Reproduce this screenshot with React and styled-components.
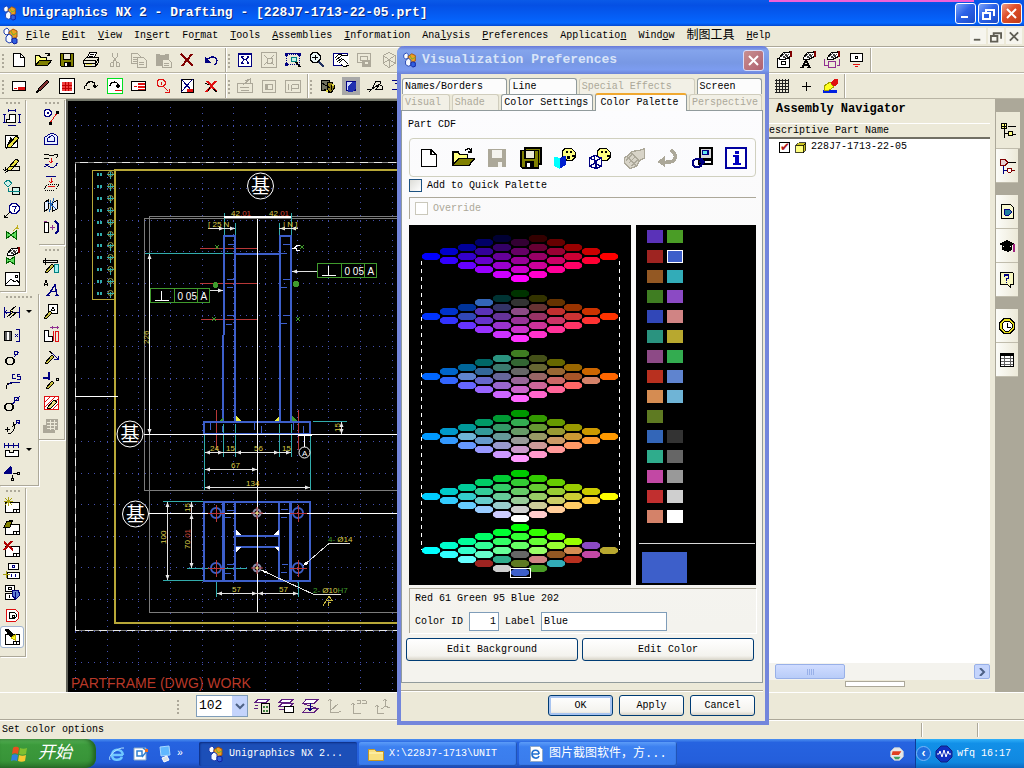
import styled, { createGlobalStyle, css } from "styled-components";

const GlobalStyle = createGlobalStyle`
    *, *::before, *::after {
        box-sizing: border-box;
    }

    body {
        margin: 0;
        background: #ece9d8;
    }

    body, button, input, select, table {
        font-family: "Liberation Mono", "Noto Sans CJK SC", monospace;
        font-size: 10px;
        line-height: 12px;
        color: #000;
    }
`;

/* ---------- icons ---------- */

const K = "#000";
const G = "#aca899";
const N = "#000080";
const R = "#e01010";
const M = "#800000";
const O = "#808000";
const Y = "#ffff80";
const W = "#fff";
const T = "#008080";

// every entry is a list of [path, stroke, fill, stroke width] on an 18 x 18 grid
const HAND = ["M4.5 6.5l4-5h5l2-1v5l-4 2-2 1h-5z", K, W];
const HATCH = ["M6 6l4-4M8 7l4-4M10 7l4-4M7 4l3 3M10 3l3 3", "#404040"];
const CUFF = ["M15 0h2v6h-2z", "none", M];
const PENCIL = ["M5 13l8-9 3 2-8 9-4 1z", K, "#e8e040"];
const SHEET = ["M2.5 6.5h14v10h-14z", K, W];
const SHEETBOX = ["M10.5 16v-2.5h6M13.5 14v2", K];
const FOLDER = [
    ["M1.5 14.5v-10h4l1 2h6v3", K, Y],
    ["M1.5 14.5l4-5h12l-4 5z", K, O],
    ["M10.5 3.5c2-2 4-2 5 1m0-3v3h-3", K],
];

const ICONS = {
    logo: [
        ["M2 3l3-2 2 2v4l-3 1-2-2z", "#2040b0", W],
        ["M7 5l4-3 4 2v6l-4 2-4-3z", "#a05010", "#f0a020"],
        ["M7 7l3 2v6l-3 1-3-2v-4z", "#2040b0", "#f4f8ff"],
        ["M12 11l3 1v4l-3 1-2-2v-3z", "#1020a0", "#3060e0"],
        ["M9 4l2 4 4-2", "#70b030"],
    ],
    new: [["M3.5 2.5h7l4 4v9h-11z", K, W], ["M10.5 2.5v4h4", K]],
    open: FOLDER,
    save: [
        ["M2.5 2.5h13v13h-12l-1-1z", K, O],
        ["M5.5 2.5h7v6h-7z", K, "#ece9d8"],
        ["M6 11h6v4h-6z", K, K],
        ["M7 12h2v3h-2z", "none", W],
    ],
    saveOff: [
        ["M2 2h14v14h-13l-1-1z", "none", G],
        ["M5 3h8v6h-8z", "none", "#f4f3ee"],
        ["M10 12h3v4h-3z", "none", "#f4f3ee"],
    ],
    saveAs: [
        ["M4.5 1.5h12v12h-12z", K, O],
        ["M1.5 3.5h13v13h-12l-1-1z", K, O],
        ["M4.5 3.5h7v6h-7z", K, "#ece9d8"],
        ["M5 12h6v4h-6z", K, K],
        ["M6 13h2v3h-2z", "none", W],
    ],
    print: [
        ["M5.5 6.5l2-5h7l-2 5", K, W],
        ["M1.5 9.5l3-3h12v5l-3 4h-11z", K, "#ece9d8"],
        ["M1.5 9.5h12v6m-12-3h12l3-5M8 3.5h4M7 5.5h4", K],
        ["M4 13h6v1h-6z", "none", "#e8e040"],
    ],
    cut: [
        ["M6.5 1.5v4l5 6M11.5 1.5v4l-5 6", G],
        ["M5.5 11.5h2v4h-3v-3zM10.5 11.5h2l1 1v3h-3z", G],
    ],
    copy: [
        ["M1.5 2.5h6l3 3v7h-9zM3 6.5h5M3 8.5h5M3 10.5h5", G],
        ["M7.5 6.5h6l3 3v7h-9zM9 11.5h5M9 13.5h5", G, "#ece9d8"],
    ],
    paste: [
        ["M2 3h13v12h-13z", "none", G],
        ["M6 2h5v2h-5z", "none", "#ece9d8"],
        ["M8.5 8.5h6l3 3v5h-9zM10 12.5h5M10 14.5h5", G, "#ece9d8"],
    ],
    delete: [["M3 3l12 12M14 3L4 15", M, "none", 2]],
    undo: [["M5 9c3-4 9-4 10 0 0 3-1 4-3 5", N, "none", 1.3], ["M3 6v6h6z", "none", N]],
    fit: [
        ["M2.5 2.5h13v13h-13zM3 3.5h12", N, W],
        ["M6 6.5l2 2-2 3M12 6.5l-2 2 2 3M5.5 7v-1.5h2M12.5 7v-1.5h-2M5.5 11v1.5h2M12.5 11v1.5h-2", N],
    ],
    fitOff: [
        ["M1.5 1.5h15v15h-15z", G],
        ["M4 4l3 3M14 4l-3 3M4 14l3-3M14 14l-3-3M7 7h5v5h-5z", G],
    ],
    zoomWin: [
        ["M2.5 3.5h13v10h-13z", N, "none", 1, "1 1"],
        ["M1 2h3v3h-3zM14 2h3v3h-3zM1 12h3v3h-3z", "none", N],
        ["M1 2.5h16", N],
        ["M7.5 6.5h5v4h-5z", T, "#c0f0e8"],
        ["M12 11l4 5", K, "none", 2],
    ],
    zoom: [
        ["M5 1.5h4l3 3v4l-3 3h-4l-3-3v-4z", K, "#e8f4f4"],
        ["M4 6.5h6M7 4v5", K],
        ["M11 11l5 5", "#203060", "none", 2.5],
    ],
    pan: [
        ["M1.5 2.5h14v12h-14z", N, W],
        ["M5 5l4-2 4 2 4-1v8l-4 4-4-2-5-5z", "none", W],
        ["M3 7l4-4 5 2 4-1M4 9l5-4M5 11l5-4M7 12l4-4 5 5M9 13l3 3 5-2", K],
    ],
    camOff: [
        ["M1.5 2.5h13v9h-13zM4.5 5.5h7v4h-7z", G],
        ["M6 9h9v7h-9z", "none", G],
        ["M9 11h3v2h-3z", "none", "#ece9d8"],
    ],
    cubeOff: [["M9 1.5l6 3v8l-6 4-6-4v-8zM3 4.5l6 4 6-4M9 8v8M3 12l6-3 6 3", G]],
    sheetRed: [["M2.5 4.5h13v9h-13z", K, W], ["M8 10h7v3h-7z", "none", R], ["M4 11.5h3", R]],
    pen: [["M3 15l2-4 8-8 2 2-8 8z", K, "#803030"], ["M2 16l3-3", K, "none", 2]],
    grid: [
        ["M1.5 1.5h15v15h-15z", K, W],
        ["M4 5h10v9h-10z", "none", "#f04040"],
        ["M4 8.5h10M4 11.5h10M7.5 5v9M10.5 5v9", "#c00000"],
    ],
    arc: [["M4 9c0-5 8-6 9-1v2M11 8l2 3 3-3", K, "none", 1.3], ["M2.5 9v3M5 12.5h3", K]],
    arcGreen: [
        ["M1.5 1.5h15v15h-15z", "#00e020", W],
        ["M4 9c0-5 8-5 8-1v2M10 8l2 3 2-3", K, "none", 1.3],
        ["M9 13.5h7", R],
    ],
    sheetText: [["M1.5 4.5h14v9h-14z", K, W], ["M8 7h7M8 10h7M8 12.5h7", R, "none", 1.4], ["M4 9.5h3", R]],
    probe: [
        ["M5 2.5h4l2 2v3l-2 2h-4l-2-2v-3zM7.5 5v3", R],
        ["M10 10l4 4M11 15.5h4.5v-4", R],
    ],
    bomBlue: [
        ["M3.5 2.5h12v13h-12z", K, W],
        ["M3 2l12 13M15 2L3 15", N],
        ["M9 12h6v3h-6z", "none", R],
    ],
    redX: [
        ["M5 4l9 10M14 4L4 15", "#e01010", "none", 2],
        ["M3 6l4 2M11 12l4 3M6 14l2-4", K],
    ],
    off1: [["M1.5 6.5h15v9h-15zM4 10.5h9M9 4l5-2v4M5 13.5h8M7 8l6-5", G]],
    off2: [["M2.5 3.5h13v12h-13zM7.5 7.5h5v5h-5z", G], ["M5 7h2v6h-2z", "none", G]],
    off3: [["M1.5 3.5h15v12h-15zM4.5 6.5v6M7.5 7.5h7v4h-7M7.5 7.5v6", G]],
    tools: [
        ["M3 3h8v10h-8z", K, "#707060"],
        ["M9 6l5-1 3 5-4 6-4-3z", K, "#908020"],
        ["M6 12l6 4M4 6l8 5M13 8v5", K],
        ["M14 7h2v2h-2zM8 13h2v2h-2z", "none", "#e8e040"],
    ],
    solid: [
        ["M0 0h18v18h-18z", "none", "#a8a8a8"],
        ["M4.5 4.5h9v9h-9z", N, "#d0d8ff"],
        ["M6 9l5-4h3v6l-4 4h-4z", "none", "#2030b0"],
    ],
    spline: [["M1 12h5l4-8h4v3l-4 5h7M6 12l6-4M3 15l3-3M12 7l4 2v4", K]],
    wire: [["M2 3.5h6v12M5 6.5h10M12.5 2v14M2 12.5h12", N]],
    folderHand: [["M2.5 7.5h12v9h-12z", K, W], HAND, HATCH, CUFF, ["M6.5 10.5h4v3h-4z", K, W]],
    textHand: [HAND, HATCH, CUFF, ["M3 17l4-8 4 8M5 14h5M1 16.5h4M8 16.5h4", K, "none", 1.5]],
    cycleHand: [
        HAND,
        HATCH,
        CUFF,
        ["M1.5 8v6h3M16.5 8v6h-3M5.5 10.5h7v6h-7z", "#903090"],
    ],
    display: [
        ["M3.5 2.5h12v8h-12z", K, W],
        ["M8.5 5.5h2v2h-2z", K],
        ["M6 13.5h7M8 15.5h3", R],
    ],
    mesh: [["M3.5 2v14M6.5 2v14M9.5 2v14M12.5 2v14M15.5 2v14M2 3.5h14M2 6.5h14M2 9.5h14M2 12.5h14M2 15.5h14", "#202020"]],
    plus: [["M9.5 5v9M5 9.5h9", K]],
    brush: [
        ["M2 13h14v3h-14z", "none", "#0020e0"],
        ["M3 9l6-4 4 5-5 3h-5z", "#a0a000", "#ffff20"],
        ["M10 6l4-4h3l-1 5-3 2z", R, R],
    ],
    dim: [
        ["M6.5 5.5v5h-3v3h9v-8z", K, W],
        ["M5 1.5h7M5.5 0v3M12.5 0v3M1.5 6v7M0 5.5h3M0 13.5h3M16.5 6v7M15 5.5h3M15 13.5h3M5 16.5h8", N],
    ],
    note: [["M2.5 3.5h12v12h-12z", K, W], ["M5 13l3-7 3 7M6 11.5h4", K, "none", 1.3], PENCIL],
    label: [PENCIL, ["M5.5 11.5h11v4h-11l-3 2", K], ["M2.5 12v4M0 14l2 2 2-2", K]],
    symbolId: [
        ["M5 2l4 3-4 4-4-4z", T, "#d0f0e8"],
        ["M9.5 9.5h7v7h-7z", K, "#d0f0e8"],
        ["M5.5 10v3.5h3M9 13.5h8", T],
    ],
    balloon: [
        ["M9 2.5h4l3 3v4l-3 3h-4l-3-3v-4z", N, W],
        ["M9 5.5h4l-2 5", N],
        ["M7 11l-6 6M1.5 14v2.5h3", K],
    ],
    weld: [["M3 7v8l5-4 5 4v-8l-5 4z", "#006000", "#60e060"], ["M10 7l5-5M14.5 1v3M16 4.5h-3", "#c0b020"]],
    weldHand: [["M3 10v7l4-3 4 3v-7l-4 3z", "#006000", "#60e060"], HAND, HATCH, CUFF],
    image: [
        ["M2.5 2.5h14v13h-14z", K, W],
        ["M3 14l5-5 4 3 2-2 3 4M12 5h2v2h-2z", K],
    ],
    rapid: [["M1.5 4v11M16.5 4v11M2 9.5h14M4 7l-2 2 2 2", N], ["M4 14l6-5-3-1 6-5M7 15l7-6-3 0", K, Y]],
    cylDim: [
        ["M1.5 5.5h7v9h-7z", K, "#606060"],
        ["M4 6h2v8h-2z", "none", W],
        ["M13 3.5h3.5v12h-3.5M12 8l3 3M12 11l3-3", N],
    ],
    hole: [
        ["M5 8.5h4l2 2v3l-2 2h-4l-2-2v-3z", K, "none", 1.4],
        ["M11 8l5-5M11.5 2.5h3v3h-3z", N],
    ],
    chamfer: [
        ["M3 17c0-6 3-6 6-6", K],
        ["M12 2.5h-2.5v4h3M17 2.5h-2.5v2h2.5v2.5h-3M8 10.5h9M5 13l4-3", N],
    ],
    diameter: [["M4 8.5h4l2 2v3l-2 2h-4l-2-2v-3z", K, "none", 1.4], ["M11.5 2.5h4v3h-4zM11 7l6-6M9 9l3-2", N]],
    radius: [["M10 4c3 5 1 11-5 12M2 11.5h5M4.5 9v5M9 9l4-3", K], ["M13.5 6v-4h2.5v2h-2.5l3 2", N]],
    ordinate: [["M1.5 2v5M5.5 2v5M10.5 2v5M15.5 2v5M1 4.5h15", N], ["M2.5 15.5v-6h4v2h4v-2h5v6z", K, W]],
    origin: [["M1 9h6v-7M6 3h2v6h-2z", N, N], ["M10 9.5h4M9.5 11v3", K], ["M14.5 8.5h2v2h-2zM8.5 14.5h2v2h-2z", K]],
    circles: [
        ["M4 1.5h3l2 2v3l-2 2h-3l-2-2v-3z", N, W],
        ["M5 4h2v2h-2z", "none", N],
        ["M8 15l7-10", R],
        ["M7 14h2v2h-2zM14 3h2v2h-2z", K, K],
    ],
    offset: [
        ["M2.5 14.5v-7l6-4c6 0 7 3 7 5v6z", N, "#e8f0ff"],
        ["M5.5 11.5v-3l4-3c3 0 3 2 3 3v3z", N],
    ],
    curves: [
        ["M2 3c5-3 6 3 10 0s4 2 2 3M2 6.5h5", K],
        ["M9.5 6v5M7 9l2 2 2-2", R],
        ["M2 15c5-4 6 3 10 0s4-4 2-4M3 12.5h4", N],
    ],
    project: [
        ["M4 2.5h10", N],
        ["M9.5 4v5M7 7l2 2 2-2", R],
        ["M2 15l4-5h11l-4 6h-11", K, "none", 1, "1 1"],
        ["M6 12.5h7", R],
    ],
    section: [
        ["M2.5 6.5l4-3v9l-4 3zM10.5 6.5l5-2v8l-5 3z", K, "#e8f0ff"],
        ["M5 5l9 8M12 2l-5 14M8.5 4v10", "#2060b0"],
    ],
    mirror: [
        ["M2.5 4.5h4v10h-4z", K, W],
        ["M2 3.5h3M8 9.5h5M10.5 7v5", "#903090"],
        ["M13 3l3 3v7l-3 3", N, "none", 1.5],
    ],
    editTool: [
        ["M1 4.5h14v2h-14zM3.5 2v7", K, "#e8e8e0"],
        ["M12.5 8.5h4v8h-4z", T, "#a0f0f0"],
        ["M3 16l7-8 2 2-7 7z", K, "#c8c040"],
    ],
    textEdit: [["M2 7l2-6 2 6M2 5.5h4", K], ["M6 16l7-10 2 10M8 12.5h6M4 16.5h4M13 16.5h4", N, "none", 1.4]],
    noteEdit: [
        ["M6.5 2.5h9v9h-9z", K, W],
        ["M9 9l2-4 2 4M10 8h2", K],
        ["M2 16l6-7 2 2-6 6z", K, "#c8c040"],
    ],
    colDim: [
        ["M2.5 16.5v-11h4v6h4v5z", K, W],
        ["M11.5 6v10M13.5 6.5h3v10h-3z", R],
        ["M8 2.5h9M10.5 1v3M15.5 1v3", "#903090"],
    ],
    arrowEdit: [["M3 15l7-8 2 2-7 7zM7 3l4 3", K, "#c8c040"], ["M10 5l6 6M12 11.5h4v-4", N]],
    crossEdit: [["M1 7h7M7 1v8", N, "none", 2], ["M4 17l6-7 2 2-6 6z", K, "#c8c040"], ["M14.5 7.5h2v2h-2z", K]],
    hatchEdit: [
        ["M2.5 2.5h14v13h-14z", R, W],
        ["M3 8l5-5M3 13l10-10M6 15l10-10M11 15l5-5", R],
        ["M5 14l7-8 3 2-7 7z", K, "#e8e080"],
    ],
    tableOff: [["M4 2h12v11h-3v3h-12v-8h3z", "none", G], ["M5 5.5h10M5 8.5h10M5 11.5h8M8.5 3v10M12.5 3v10", "#ece9d8"]],
    sheetNew: [SHEET, SHEETBOX, ["M5.5 1v9M1 5.5h9M2 2l7 7M9 2l-7 7", "#a8a010"]],
    sheetOpen: [SHEET, SHEETBOX, ["M1 9l3-6h5l-2 6z", K, O], ["M6 3c2-2 3-1 4 1", K]],
    sheetDelete: [SHEET, SHEETBOX, ["M1 2l9 8M9 1l-8 9", "#b00000", "none", 2]],
    viewAdd: [
        ["M5.5 1.5h10v6h-10zM4.5 10.5h12v6h-12z", K, W],
        ["M9.5 3.5h2v2h-2zM8.5 12v3M12.5 12v3", N],
        ["M3.5 9v7M0 12.5h7", "#a8a010"],
    ],
    viewMove: [
        ["M2.5 1.5h9v6h-9zM2.5 9.5h9v6h-9z", K, W],
        ["M5.5 3.5h3v2h-3zM6.5 11v3", K],
        ["M9 7l6-1 2 5-4 4-4-3zM12 8v8", N, "#6080d0"],
    ],
    viewRed: [
        ["M3.5 3.5h9l3 3v6l-3 3h-9z", R, W],
        ["M6.5 6.5h5l2 2v2l-2 2h-5zM9 9h2v2h-2z", K],
    ],
    viewPen: [
        SHEET,
        SHEETBOX,
        ["M2 2l3-1 6 6-2 3z", K, K],
        ["M8 10l4-3v5z", "#c0b000", "#ffff20"],
    ],
    layer1: [
        ["M5 2.5h11l-3 3h-11zM5 8.5h-3M5 11.5h-4", "#602080", W],
        ["M8.5 6.5h8v10h-8z", K, "#ece9d8"],
        ["M10 9h2v2h-2zM13 9h2v2h-2zM10 13h2v2h-2zM13 13h2v2h-2z", "none", "#408040"],
    ],
    layer2: [
        ["M5 2.5h11l-3 3h-11zM5 6.5h11l-3 3h-11zM2 12.5h5", "#602080", W],
        ["M7.5 9.5h9v6h-9z", K, W],
    ],
    layer3: [
        ["M5 2.5h12l-4 4h-11z", "#602080", W],
        ["M5 11.5h12l-4 4h-11zM3 7l12 4", "#602080"],
        ["M9.5 6v7M7 11l2 3 3-3", N],
    ],
    csys1: [["M5.5 2v13h8M3 4l2-2 2 2M5 14l8-7M14 14.5h2", G]],
    csys2: [["M4.5 6v10h7M2 8l2-2 2 2M8 3.5h3v3h-3M13 3.5h4M13 6.5h4v-3", G]],
    csys3: [["M4.5 8v8h6M2 10l2-2 2 2M12.5 2v7l-4 3M12 9l5 2M10 4l2-2 2 2", G]],
    paletteCube: [
        ["M9 2h5l3 3v3l-3 3h-3l-4-3v-4z", K, Y],
        ["M10 4h1v1h-1zM13 4h1v1h-1zM15 7h1v1h-1zM11 8h1v1h-1z", K, K],
        ["M1 8l4 1v8l-4-2z", "none", "#00ffff"],
        ["M5 9l5-2v7l-5 3z", "none", "#0020d0"],
    ],
    paletteWire: [
        ["M9 2h5l3 3v3l-3 3h-3l-4-3v-4z", K, Y],
        ["M10 4h1v1h-1zM13 4h1v1h-1zM15 7h1v1h-1z", K, K],
        ["M1 9l4-2 5 2v6l-4 2-5-2zM1 9l5 2 4-2M6 11v6M5 7v6l-4 2M5 13l5 2", N, W],
    ],
    handOff: [
        ["M2 9l6-5 6-1 3-1v7l-4 2-2 4-5 2-4-4z", G, "#d8d4c8"],
        ["M3 11l5-5M5 13l5-5M7 15l5-5M4 8l7 7M7 5l6 6", G],
    ],
    backOff: [["M11 3c6 4 4 10-4 9", G, "none", 2.5], ["M1 12l6-5v9z", "none", G]],
    monitor: [
        ["M7.5 1.5h9v8h-9z", K, "#d8d8d8"],
        ["M9.5 3.5h4v3h-4z", N, "#60e8f0"],
        ["M6.5 10.5h10v3h-10z", K, W],
        ["M8 10c-7-2-8 6-3 6 3 0 4-2 4-4M7 13l2-3 2 3", N, "none", 1.6],
    ],
    info: [
        ["M1.5 1.5h15v15h-15z", "#0000a0", W],
        ["M8 4h3v2h-3zM7 7h4v6h2v1h-6v-1h1v-5h-1z", "none", "#0000c0"],
    ],
    tree: [
        ["M2.5 2.5h5v5h-5zM5.5 2v5M3 5.5h5", K, Y],
        ["M9 5.5h8M5.5 8v9M5 12.5h4", K],
        ["M9.5 10.5h4v4h-4z", K, Y],
        ["M14 13.5h3", K],
    ],
    treeRed: [
        ["M3 2.5h4l2 2v2l-2 2h-4l-1-2v-3z", M, "#e8d0d0"],
        ["M10 5.5h8", K],
        ["M5.5 9v8M5 13.5h4", N],
        ["M10 11h3l1 2-1 2h-3l-1-2zM14 13.5h3", M, W],
    ],
    web: [
        ["M3.5 1.5h9l3 3v11h-12z", K, "#f8f8d0"],
        ["M7 6h4l2 2v2l-2 2h-4l-1-2v-2z", N, "#2080a0"],
    ],
    cap: [["M1 7l8-4 8 4-8 4z", "none", K], ["M4 9l5 2 5-2v4l-4 2-6-2z", "none", K], ["M16 7v8", "#a02080", "none", 1.5]],
    help: [
        ["M2.5 1.5h12l1 1v11h-3v3l-3-3h-7z", K, "#f8f8c0"],
        ["M6.5 6v-2h4v3l-2 1v2M8.5 11v1", N, "none", 1.4],
    ],
    clock: [
        ["M6 1.5h6l4.500 4.500v6l-4.500 4.500h-6l-4.500-4.500v-6z", K, "#e8e020"],
        ["M7 4h4l3 3v4l-3 3h-4l-3-3v-4z", K, W],
        ["M9.5 6v4h3", K],
    ],
    sheetGrid: [
        ["M2.5 2.5h13v13h-13z", K, W],
        ["M3 4h12", K, "none", 2],
        ["M3 7.500h12M3 10.500h12M3 13.500h12M6.500 5v10M12.500 5v10", "#606060"],
    ],
    cube: [
        ["M2.5 6.5h10v10h-10z", K, Y],
        ["M2.5 6.5l4-4h10l-4 4zM12.5 6.5l4-4v10l-4 4z", K, "#c8c020"],
    ],
    ie: [
        ["M15 10h-11c0 6 8 6 10 2M4 10c0-7 10-7 11 0", "#70c8ff", "none", 2.5],
        ["M2 15c-3-4 8-13 14-12", "#b0e0ff"],
    ],
    mail: [
        ["M2 3h12v12h-12z", "#88a8c8", W],
        ["M5 6h5v5h-5zM11 3l4 3-5 6", "#3080d0", "none", 1.5],
        ["M13 4h3v3h-3z", "none", "#f07020"],
    ],
    desktop: [
        ["M4 2l9-1 1 9-9 1z", "#a8d8ff", "#60b8ff"],
        ["M6 13l5-2 2 4-5 2z", W, "#d8e0e8"],
    ],
    folderTask: [
        ["M1.5 4.5h6l2 2h7v9h-15z", "#c89820", "#f8e080"],
        ["M2 8h14", "#fff8c0"],
    ],
    iePage: [
        ["M3.5 1.5h9l3 3v12h-12z", "#90a8c8", W],
        ["M12 9h-7c0 5 6 5 7 2M5 9c0-5 7-5 7 0", "#2070d0", "none", 1.6],
    ],
    trayRed: [
        ["M6 2h6l4 4v6l-4 4h-6l-4-4v-6z", "#c8d0d8", "#e8e8e8"],
        ["M4 6h10l-3 4h-8z", "none", "#e04020"],
        ["M5 12h8l-2 3h-4z", "none", "#40a060"],
    ],
    trayWave: [
        ["M6 1h6l5 5v6l-5 5h-6l-5-5v-6z", "#102080", "#1030c0"],
        ["M2 9h2l1-3 2 6 2-7 2 7 2-6 1 3h2", W],
    ],
};

const SMOOTH = ["logo", "ie", "mail", "desktop", "folderTask", "iePage", "trayRed", "trayWave"];

const Svg = styled.svg`
    display: block;
    flex: none;
    width: ${({ $size }) => $size}px;
    height: ${({ $size }) => $size}px;
    shape-rendering: ${({ $smooth }) => ($smooth ? "auto" : "crispEdges")};
`;

const Icon = ({ name, size = 18 }) => (
    <Svg $size={size} $smooth={SMOOTH.includes(name)} viewBox="0 0 18 18" aria-hidden="true">
        {ICONS[name].map(([d, stroke, fill = "none", width = 1, dash], i) => (
            <path
                key={i}
                d={d}
                stroke={stroke}
                fill={fill}
                strokeWidth={width}
                strokeDasharray={dash}
            />
        ))}
    </Svg>
);

/* ---------- main window ---------- */

const Screen = styled.div`
    position: relative;
    display: flex;
    flex-direction: column;
    min-height: 100vh;
    overflow: hidden;
    background: #ece9d8;
`;

const TitleBar = styled.header`
    position: relative;
    display: flex;
    align-items: center;
    gap: 4px;
    height: 26px;
    padding: 0 2px;
    background: linear-gradient(#0a5ae8, #0550e4 20%, #0560f8 70%, #0468ff 88%, #0348d0);
`;

const Title = styled.h1`
    flex: 1;
    margin: 0;
    font-size: 13px;
    line-height: 18px;
    color: #fff;
    text-shadow: 1px 1px #0a2a80;
`;

const PinkEdge = styled.span`
    position: absolute;
    top: 0;
    right: 50px;
    width: 20%;
    height: 2px;
    background: #f060d8;
`;

const CaptionButton = styled.button`
    display: flex;
    align-items: center;
    justify-content: center;
    width: 21px;
    height: 21px;
    margin-left: -2px;
    padding: 0;
    border: 1px solid #fff;
    border-radius: 3px;
    background: ${({ $close }) =>
        $close
            ? "linear-gradient(135deg, #f0a088, #e0502c 40%, #c03c18)"
            : "linear-gradient(135deg, #7ca4f8, #2c62e8 45%, #1c4cc8)"};

    ${({ $faded }) =>
        $faded &&
        css`
            border-color: #d8dcf8;
            background: linear-gradient(135deg, #c89090, #b06070);
        `}
`;

const Glyph = styled.svg`
    width: 13px;
    height: 13px;
    fill: none;
    stroke: ${({ $color }) => $color || "#fff"};
    stroke-width: 2;
`;

const GLYPHS = {
    min: "M2 10h7",
    restore: "M4 3h8v6M4 2v3M1 6h7v6h-7z",
    close: "M2 2l9 9M11 2l-9 9",
};

const WindowGlyph = ({ name, color }) => (
    <Glyph viewBox="0 0 13 13" $color={color} aria-hidden="true">
        <path d={GLYPHS[name]} />
    </Glyph>
);

const MenuBar = styled.nav`
    display: flex;
    align-items: center;
    height: 21px;
    padding-left: 2px;
    border-bottom: 1px solid #aca899;
`;

const MenuItem = styled.button`
    padding: 0 6px;
    border: 0;
    background: none;
    font-size: ${({ $cjk }) => ($cjk ? 12 : 10)}px;
`;

const MenuSpace = styled.div`
    flex: 1;
`;

const MdiButton = styled.button`
    display: flex;
    align-items: center;
    justify-content: center;
    width: 16px;
    height: 16px;
    margin-right: 2px;
    padding: 0 2px;
    border: 0;
    background: #f6f5ee;
`;

const ToolRow = styled.div`
    display: flex;
    height: 26px;
    padding-right: ${({ $end }) => $end}px;
    border-top: 1px solid #fff;
    border-bottom: 1px solid #b8b4a4;
`;

const ToolGroup = styled.div`
    display: flex;
    flex: ${({ $grow }) => ($grow ? 1 : "none")};
    align-items: center;
    padding-right: 2px;
    border-right: 1px solid #aca899;
    box-shadow: 1px 0 #fff;
`;

const Grip = styled.span`
    flex: none;
    width: 7px;
    height: 15px;
    background: radial-gradient(circle at 3px 2px, #aca899 1px, transparent 1px);
    background-size: 7px 4px;
`;

const ToolButton = styled.button`
    display: flex;
    align-items: center;
    justify-content: center;
    flex: none;
    width: ${({ $w }) => $w || 24}px;
    height: ${({ $h }) => $h || 24}px;
    padding: 0;
    border: 1px solid transparent;
    background: none;

    ${({ $on }) =>
        $on &&
        css`
            border-color: #a0b4d0;
            border-radius: 3px;
            background: #fff;
        `}
`;

const Tools = ({ names, w, h }) =>
    names.map((name) => (
        <ToolButton key={name} aria-label={name} $w={w} $h={h}>
            <Icon name={name} />
        </ToolButton>
    ));

const Workspace = styled.div`
    display: flex;
    flex: 1;
`;

const Dock = styled.aside`
    display: flex;
    flex: none;
    align-items: flex-start;
    padding-top: 1px;
`;

const DockColumn = styled.div`
    width: ${({ $w }) => $w}px;
`;

const DockBar = styled.div`
    width: ${({ $w }) => $w}px;
    margin-bottom: 2px;
    padding-bottom: ${({ $pad }) => $pad || 1}px;
    border-right: 1px solid #aca899;
    border-bottom: 1px solid #aca899;
    box-shadow: 1px 1px #fff;
`;

const DockGrip = styled.div`
    height: 6px;
    margin: 0 5px;
    background: radial-gradient(circle at 2px 3px, #aca899 1px, transparent 1px);
    background-size: 4px 6px;
`;

const DockRow = styled.div`
    display: flex;
    align-items: center;
`;

const DropArrow = styled.span`
    margin-left: 2px;
    border: 3px solid transparent;
    border-top-color: #000;
    border-bottom: 0;
`;

const DockTools = ({ names, h, w = 24, on, drops = [] }) =>
    names.map((name) => (
        <DockRow key={name}>
            <ToolButton aria-label={name} $w={w} $h={h} $on={name === on}>
                <Icon name={name} />
            </ToolButton>
            {drops.includes(name) && <DropArrow />}
        </DockRow>
    ));

/* ---------- drawing ---------- */

const Viewport = styled.main`
    flex: 1;
    min-width: 0;
    overflow: hidden;
    border-top: 2px solid #74786c;
    border-left: 2px solid #606058;
    background: #000;
`;

const Sheet = styled.svg`
    display: block;
    width: 100%;
    height: 100%;
    fill: none;
    shape-rendering: crispEdges;
`;

const Note = styled.text`
    font-family: "Liberation Sans Narrow", "Liberation Sans", "Noto Sans CJK SC", sans-serif;
    font-size: ${({ $size }) => $size || 8}px;
    fill: ${({ $color }) => $color || "#dccc48"};
`;

const FrameName = styled.text`
    font-family: "Liberation Sans", sans-serif;
    font-size: 14px;
    fill: #b83828;
`;

const BLUE = "#3d5fca";
const TEAL = "#32acac";
const RED = "#b83838";
const GREEN = "#3f9a2c";

const gridLines = Array.from({ length: 22 }, (_, i) => i);

const Datum = ({ x, y }) => (
    <g shapeRendering="auto">
        <circle cx={x} cy={y} r="13" stroke="#fff" />
        <Note x={x} y={y + 7} textAnchor="middle" $size={19} $color="#fff">
            基
        </Note>
    </g>
);

const Tolerance = ({ x, y }) => (
    <g>
        <path d={`M${x} ${y}h59v14h-59zM${x + 24} ${y}v14M${x + 47} ${y}v14`} stroke={GREEN} />
        <path d={`M${x + 11} ${y + 2}v10M${x + 4} ${y + 12}h14`} stroke="#fff" />
        <Note x={x + 27} y={y + 11} $size={10} $color="#fff">
            0 05
        </Note>
        <Note x={x + 50} y={y + 11} $size={10} $color="#fff">
            A
        </Note>
    </g>
);

const Hole = ({ x, y }) => (
    <g>
        <circle cx={x} cy={y} r="5" stroke={BLUE} strokeWidth="2" shapeRendering="auto" />
        <path d={`M${x - 8} ${y}.5h17M${x}.5 ${y - 8}v17`} stroke={RED} />
    </g>
);

const Pin = ({ x, y }) => (
    <g shapeRendering="auto">
        <circle cx={x} cy={y} r="3.5" stroke="#8890b0" strokeWidth="2" />
        <path d={`M${x - 6} ${y}h12M${x} ${y - 6}v12`} stroke={RED} />
        <circle cx={x} cy={y} r="1.5" fill="#d8d880" />
    </g>
);

const arrow = {
    left: (x, y) => `M${x} ${y}l5-2v4z`,
    right: (x, y) => `M${x} ${y}l-5-2v4z`,
    up: (x, y) => `M${x} ${y}l-2 5h4z`,
    down: (x, y) => `M${x} ${y}l-2-5h4z`,
};

const ARROWS = [
    arrow.left(205, 452.5),
    arrow.right(223, 452.5),
    arrow.left(236, 452.5),
    arrow.right(279, 452.5),
    arrow.right(291, 452.5),
    arrow.left(205, 469.5),
    arrow.right(257, 469.5),
    arrow.left(205, 487.5),
    arrow.right(310, 487.5),
    arrow.left(217, 593.5),
    arrow.right(257, 593.5),
    arrow.left(258, 593.5),
    arrow.right(298, 593.5),
    arrow.up(167.5, 502),
    arrow.down(167.5, 580),
    arrow.up(191.5, 502),
    arrow.up(191.5, 514),
    arrow.down(191.5, 568),
    arrow.up(341.5, 422),
    arrow.down(341.5, 434),
    arrow.up(149.5, 254),
    arrow.down(149.5, 434),
    arrow.right(223, 290.5),
    arrow.left(292, 271.5),
    arrow.right(224, 228.5),
    arrow.right(235, 228.5),
    arrow.left(280, 228.5),
    arrow.left(291, 228.5),
].join("");

const Drawing = () => (
    <Sheet role="img" aria-label="228J7-1713-22-05 drawing sheet">
        <g transform="translate(-68 -101)">
            {gridLines.map((i) => (
                <g key={i} stroke="#4450b0" strokeDasharray="1 5.33">
                    <path d={`M${Math.round(75 + i * 31.67)}.5 107V692`} />
                    <path d={`M75 ${Math.round(125 + i * 31.6)}.5H760`} />
                </g>
            ))}

            <path d="M760 162.5H75.5V630.5H760" stroke="#808080" />
            <path d="M760 162.5H75.5V630.5H760" stroke="#e8e8e8" strokeDasharray="8 6" />
            <path d="M760 216.5H149.5V612.5H760M760 218.5H144.5V490.5H760" stroke="#7c7c7c" />
            <path d="M760 170H115V623H760" stroke="#b8a838" strokeWidth="2" />
            <path d="M115 170.5H92.5V299.5H115" stroke="#b8a838" />
            <path d="M110.5 172V298" stroke={TEAL} strokeDasharray="7 5" />
            {gridLines.slice(0, 11).map((i) => (
                <g key={i}>
                    <circle
                        cx="110.5"
                        cy={Math.round(174 + i * 11.9)}
                        r="2.5"
                        stroke="#98a050"
                        shapeRendering="auto"
                    />
                    <path d={`M107 ${Math.round(174 + i * 11.9)}.5h7`} stroke={TEAL} />
                    <path
                        d={`M97 ${Math.round(174 + i * 11.9)}h5`}
                        stroke={TEAL}
                        strokeWidth="3"
                        strokeDasharray="2 1"
                    />
                </g>
            ))}

            <path d="M145 253.5H233M224.5 213V236M235.5 223V236M279.5 223V236M291.5 213V236" stroke={TEAL} />
            <path
                d="M204.5 434V490M223.5 424V457M235.5 424V457M279.5 424V457M291.5 424V457M310.5 434V490M313 421.5H347M163 501.5H203M163 580.5H203M187 568.5H247M187 513.5H204M216.5 580V597M257.5 580V597M298.5 580V597"
                stroke={TEAL}
            />
            <path
                d="M200 248.5H258M200 283.5H258M201 319.5H258M216.5 410V450M257.5 414V448M298.5 410V450"
                stroke={RED}
            />
            <path
                d="M223 421V335M224 335V236H235V421M280 421V236H291V421M235 254H280M204 422H310V434H204zM204 502H310V581H204zM235 502V581M279 502V581M235 536H279M235 547H279"
                stroke={BLUE}
                strokeWidth="2"
            />
            <path d="M223.5 502V581M290.5 502V581" stroke={BLUE} strokeWidth="3" />
            <path
                d="M228 244.5h7M227 279.5h7M227 287.5h6M227 315.5h8M226 324.5h6M283 244.5h7M281 253.5h6M283 279.5h7M281 287.5h6M283 315.5h7M281 323.5h6M210.5 423v7M222.5 426v6M254.5 423v7M261.5 426v7M293.5 423v7M303.5 426v7M227 510.5h7M225 517.5h6M281 509.5h7M281 517.5h6M227 564.5h7M225 573.5h6M282 564.5h6M281 572.5h6"
                stroke={BLUE}
            />

            <path
                d="M257.5 219V612M144 434.5H760M149 513.5H760M75 396.5H118M149.5 254V434M304.5 435V447"
                stroke="#fff"
            />
            <path d="M224 217H291M298 435H312" stroke="#fff" strokeWidth="2" />
            <path
                d="M208 228.5H235M279 228.5H298M205 452.5H291M205 469.5H257M205 487.5H310M341.5 422V434M167.5 502V580M191.5 502V568M217 593.5H298M210 290.5H223M317 271.5H292M303 566L329 543.5H350M261 570L314 594.5H341"
                stroke="#e0e0e0"
            />
            <path d={ARROWS} fill="#e8e8e8" shapeRendering="auto" />
            <path d="M303 566l3-5 2 3zM261 570l6 1-2 3z" fill="#fff" />

            <path d="M236 421v-5l5 5zM279 421v-5l-5 5z" fill="#f0f040" />
            <path d="M223 421v-4l-4 4zM292 421v-5l5 5z" fill={GREEN} />
            <path
                d="M236 535v-6l5 6zM279 535v-6l-5 6zM236 547h5l-5 5zM279 547h-5l5 5z"
                fill="#fff"
            />

            <circle cx="215.5" cy="285" r="3" fill={GREEN} />
            <circle cx="296" cy="284" r="3" fill={GREEN} />
            <path
                d="M215 245l4 4M219 245l-4 4M300 245l4 4M304 245l-4 4M212 317l4 4M216 317l-4 4M296 317l4 4M300 317l-4 4"
                stroke={GREEN}
            />
            <path d="M292 248.5h5M300 245.5h-3l-2 2 2 3h3" stroke="#fff" />

            <Hole x={216} y={513} />
            <Hole x={298} y={513} />
            <Hole x={216} y={568} />
            <Hole x={298} y={568} />
            <Pin x={257} y={513} />
            <Pin x={257} y={568} />

            <Datum x={260.5} y={186} />
            <Datum x={130} y={434} />
            <Datum x={135.5} y={514} />
            <circle cx="304.5" cy="452.5" r="5.5" stroke="#fff" shapeRendering="auto" />
            <Note x="302" y="456" $color="#fff">A</Note>
            <Tolerance x={150.5} y={288.5} />
            <Tolerance x={317.5} y={263.5} />

            <Note x="231" y="216">42<tspan fill="#d04838">.01</tspan></Note>
            <Note x="269" y="216">42<tspan fill="#d04838">.01</tspan></Note>
            <Note x="208" y="227">[ 25 N</Note>
            <Note x="283" y="227">| N ]</Note>
            <Note x="210" y="451">24</Note>
            <Note x="226" y="451">15</Note>
            <Note x="254" y="451">56</Note>
            <Note x="282" y="451">15</Note>
            <Note x="231" y="468">67</Note>
            <Note x="246" y="486">134</Note>
            <Note x="232" y="592">57</Note>
            <Note x="279" y="592">57</Note>
            <Note transform="translate(149 344) rotate(-90)">226</Note>
            <Note transform="translate(340 432) rotate(-90)">15</Note>
            <Note transform="translate(166 544) rotate(-90)">100</Note>
            <Note transform="translate(190 512) rotate(-90)">15</Note>
            <Note transform="translate(190 549) rotate(-90)">
                70<tspan fill="#d04838">.01</tspan>
            </Note>
            <Note x="328" y="542"><tspan fill={GREEN}>4-</tspan> Ø14</Note>
            <Note x="313" y="593"><tspan fill={GREEN}>2-</tspan> Ø10<tspan fill={GREEN}>H7</tspan></Note>
            <path d="M323 606l6-10 3 4h-6M328 606v-4h3" stroke="#c8b840" />

            <FrameName x="71" y="688">PARTFRAME (DWG) WORK</FrameName>
        </g>
    </Sheet>
);

/* ---------- navigator ---------- */

const Navigator = styled.section`
    display: flex;
    flex-direction: column;
    flex: none;
    width: 232px;
    padding-top: 1px;
    border-left: 2px solid #aca899;
`;

const NavTitle = styled.h2`
    margin: 0;
    padding: 2px 0 6px 16px;
    border-bottom: 1px solid #fff;
    font-size: 12px;
    line-height: 15px;
`;

const TreeArea = styled.div`
    flex: 1;
    background: #fff;
`;

const Tree = styled.table`
    width: 100%;
    border-collapse: collapse;

    th {
        padding: 1px 0 0 3px;
        border-bottom: 2px solid #716f64;
        background: #ece9d8;
        font-weight: normal;
        text-align: left;
    }

    td {
        padding: 0 0 0 19px;
    }
`;

const TreeItem = styled.label`
    display: flex;
    align-items: center;
    gap: 4px;
    height: 16px;
`;

const TreeCheck = styled.input`
    position: relative;
    appearance: none;
    width: 11px;
    height: 11px;
    margin: 0;
    border: 1px solid #000;
    background: #fff;

    &:checked::after {
        content: "✔";
        position: absolute;
        top: -2px;
        left: 0;
        font-family: "DejaVu Sans", sans-serif;
        font-size: 12px;
        color: #b01818;
    }
`;

const ScrollBar = styled.div`
    display: flex;
    justify-content: space-between;
    align-items: center;
    height: 17px;
    padding-left: 15px;
    background: #f4f3ee;
`;

const ScrollThumb = styled.div`
    width: 70px;
    height: 15px;
    border: 1px solid #98b0e8;
    border-radius: 2px;
    background: repeating-linear-gradient(90deg, #98b0e8 0 1px, transparent 1px 2px) center / 7px 6px
            no-repeat,
        linear-gradient(#d0dcff, #b8ccf8);
`;

const ScrollButton = styled.button`
    width: 16px;
    height: 15px;
    padding: 0;
    border: 1px solid #98b0e8;
    border-radius: 2px;
    background: #c4d4fc;

    svg {
        display: block;
        margin: auto;
    }
`;

const Splitter = styled.div`
    display: flex;
    justify-content: center;
    height: 12px;
    padding: 1px 0 0;
`;

const SplitterGrip = styled.span`
    width: 60px;
    height: 6px;
    border: 1px solid #aca899;
    background: #fff;
`;

const ResourceBar = styled.aside`
    flex: none;
    width: 34px;
    padding: 13px 3px 0 6px;
    background: linear-gradient(90deg, #ece9d8 5px, #aca899 5px);
`;

const ResourceTab = styled.button`
    display: flex;
    align-items: center;
    justify-content: center;
    width: ${({ $on }) => ($on ? 24 : 22)}px;
    height: ${({ $on }) => ($on ? 37 : 34)}px;
    margin-top: ${({ $gap }) => ($gap ? 12 : 0)}px;
    padding: 0;
    border: 0;
    border-bottom: 1px solid #c0bcac;
    background: ${({ $on }) => ($on ? "#ece9d8" : "linear-gradient(90deg, #fcfcf8, #ece9d8)")};
`;

/* ---------- bottom bars ---------- */

const LayerBar = styled.div`
    display: flex;
    align-items: center;
    height: 28px;
    padding-left: 175px;
    border-top: 1px solid #fff;
    border-bottom: 1px solid #aca899;
`;

const LayerSelectBox = styled.label`
    position: relative;
    margin: 0 2px 0 14px;
`;

const LayerSelect = styled.select`
    appearance: none;
    display: block;
    width: 52px;
    height: 22px;
    padding: 0 2px;
    border: 1px solid #7f9db9;
    border-radius: 0;
    background: #fff;
    font-size: 13px;
`;

const SelectArrow = styled.svg`
    position: absolute;
    top: 1px;
    right: 1px;
    width: 15px;
    height: 20px;
    background: #c4d4fc;
    pointer-events: none;
`;

const StatusBar = styled.footer`
    display: flex;
    align-items: center;
    height: 19px;
    padding-left: 2px;
    border-top: 1px solid #fff;
`;

const StatusText = styled.span`
    flex: 1;
`;

const StatusCell = styled.span`
    width: ${({ $w }) => $w}px;
    height: 14px;
    border-left: 1px solid #aca899;
    box-shadow: inset 1px 0 #fff;
`;

const Taskbar = styled.footer`
    display: flex;
    align-items: center;
    height: 29px;
    background: linear-gradient(#4c90f0, #2663e0 12%, #245edb 80%, #1c48b0);
`;

const StartButton = styled.button`
    display: flex;
    align-items: center;
    gap: 8px;
    width: 96px;
    height: 29px;
    padding: 0 0 0 10px;
    border: 0;
    border-radius: 0 10px 10px 0;
    background: linear-gradient(#5cb85c, #3c9a3c 20%, #389438 75%, #2c742c);
    box-shadow: inset -3px 0 4px #206020;
    font-size: 17px;
    font-style: italic;
    line-height: 24px;
    color: #fff;
`;

const Flag = styled.svg`
    width: 20px;
    height: 20px;
`;

const QuickLaunch = styled.div`
    display: flex;
    align-items: center;
    width: 103px;
    padding-left: 9px;
    color: #fff;
`;

const TaskButton = styled.button`
    display: flex;
    align-items: center;
    gap: 4px;
    width: 158px;
    height: 24px;
    margin-right: 2px;
    padding: 0 8px;
    border: 0;
    border-radius: 2px;
    background: ${({ $on }) => ($on ? "#1c4fb8" : "linear-gradient(#5c9cf8, #3c80f0 20%, #3a7cec)")};
    box-shadow: ${({ $on }) => ($on ? "inset 1px 1px 2px #0c2c80" : "inset -1px -1px 1px #2050b0")};
    font-size: ${({ $cjk }) => ($cjk ? 12 : 10)}px;
    color: #fff;
    white-space: nowrap;
`;

const Tray = styled.div`
    display: flex;
    align-items: center;
    gap: 4px;
    width: 109px;
    height: 29px;
    border-left: 1px solid #0c3c98;
    background: linear-gradient(#30b0f8, #1290e8 15%, #1088e0 80%, #0c68c0);
    color: #fff;
`;

const TrayArrow = styled.button`
    width: 15px;
    height: 15px;
    padding: 0;
    border: 1px solid #78b8f8;
    border-radius: 8px;
    background: #2070e0;
    font-size: 12px;
    font-weight: bold;
    color: #fff;
`;

/* ---------- dialog ---------- */

const Dialog = styled.section`
    position: absolute;
    top: 46px;
    left: 397px;
    width: 372px;
    border: solid #7386dc;
    border-width: 0 4px 4px;
    border-radius: 7px 7px 0 0;
    background: #ece9d8;
`;

const DialogTitle = styled.header`
    display: flex;
    align-items: center;
    gap: 4px;
    height: 28px;
    margin: 0 -4px;
    padding: 0 5px;
    border-radius: 7px 7px 0 0;
    background: linear-gradient(#6878d8, #84a4ec 15%, #7898e4 60%, #7c9cf0 85%, #6c84d8);

    h2 {
        flex: 1;
        margin: 0;
        font-size: 13px;
        line-height: 18px;
        color: #d8e4f8;
    }
`;

const DialogBody = styled.div`
    padding: 4px 2px 0 0;
`;

const TabRow = styled.div`
    display: flex;
    gap: 2px;
    height: 16px;
    padding: 0 1px;
    align-items: flex-end;
`;

const Tab = styled.button`
    flex: ${({ $w }) => $w} 1 0;
    min-width: 0;
    height: 16px;
    padding: 0 2px;
    border: 1px solid #919b9c;
    border-bottom: 0;
    border-radius: 3px 3px 0 0;
    background: #fcfcfc;
    text-align: left;
    white-space: nowrap;

    &:disabled {
        border-color: #d0cdbd;
        background: #f2f0e6;
        color: #aca899;
    }

    ${({ $on }) =>
        $on &&
        css`
            height: 18px;
            margin-bottom: -1px;
            padding: 0 4px;
            border-top: 2px solid #f0a830;
        `}
`;

const TabPanel = styled.div`
    height: 573px;
    padding: 8px 4px 0;
    border: 1px solid #919b9c;
    background: linear-gradient(#fcfcfe, #f4f3ee 90%);
`;

const PartName = styled.p`
    margin: 0 2px 7px;
`;

const PaletteTools = styled.div`
    display: flex;
    justify-content: space-between;
    align-items: center;
    height: 39px;
    margin: 0 2px 0 3px;
    padding: 0 7px;
    border: 1px solid #d0d0bf;
    border-radius: 4px;
`;

const CheckLabel = styled.label`
    display: flex;
    align-items: center;
    gap: 5px;
    padding: 2px 3px;

    ${({ $boxed }) =>
        $boxed &&
        css`
            margin: 3px 2px 6px 3px;
            padding: 4px 5px;
            border: solid #aca899;
            border-width: 1px 0 0 1px;
            color: #aca899;
        `}
`;

const Check = styled.input`
    appearance: none;
    width: 13px;
    height: 13px;
    margin: 0;
    border: 1px solid #1c5180;
    background: linear-gradient(135deg, #dcdcd7, #fff);

    &:disabled {
        border-color: #cac8bb;
        background: #fff;
    }
`;

const Palettes = styled.div`
    display: flex;
    gap: 5px;
    margin: 0 2px 0 3px;
`;

const ColorStack = styled.svg`
    display: block;
    flex: none;
    width: 222px;
    height: 360px;
    background: #000;
`;

const SwatchPanel = styled.div`
    display: flex;
    flex-direction: column;
    justify-content: space-between;
    flex: 1;
    padding: 5px 1px 2px 3px;
    background: #000;
`;

const SwatchGrid = styled.div`
    display: grid;
    grid-template-columns: 16px 16px;
    gap: 7px 4px;
    padding-left: 8px;
`;

const Swatch = styled.button`
    width: 16px;
    height: 13px;
    padding: 0;
    border: ${({ $on }) => ($on ? "1px solid #fff" : "0")};
    background: ${({ $color }) => $color};
`;

const Current = styled.div`
    padding: 8px 3px 0;
    border-top: 1px solid #d8d8d8;

    &::before {
        content: "";
        display: block;
        width: 45px;
        height: 31px;
        background: #3d5fca;
    }
`;

const ColorInfo = styled.div`
    margin: 3px 2px 5px 3px;
    padding: 4px 5px 2px;
    border: solid #aca899;
    border-width: 1px 0 0 1px;
    box-shadow: 1px 1px #fff;

    p {
        margin: 0 0 7px;
    }
`;

const Fields = styled.div`
    display: flex;
    align-items: center;
    gap: 6px;

    label {
        display: flex;
        align-items: center;
        gap: 6px;
    }
`;

const TextBox = styled.input`
    width: ${({ $w }) => $w}px;
    height: 19px;
    padding: 0 2px;
    border: 1px solid #7f9db9;
    background: #fff;
    text-align: ${({ $right }) => ($right ? "right" : "left")};
`;

const PushButton = styled.button`
    flex: ${({ $w }) => ($w ? "none" : 1)};
    width: ${({ $w }) => $w}px;
    height: ${({ $w }) => ($w ? 21 : 23)}px;
    padding: 0;
    border: 1px solid #003c74;
    border-radius: 3px;
    background: linear-gradient(#fff, #f4f3ee 80%, #d8d4c8);
    box-shadow: ${({ $default }) => ($default ? "inset 0 0 0 2px #a8c4f0" : "none")};
`;

const ButtonRow = styled.div`
    display: flex;
    gap: 4px;
    padding: 0 4px 0 0;
`;

const DialogButtons = styled.div`
    display: flex;
    justify-content: flex-end;
    gap: 6px;
    margin-top: 7px;
    padding: 4px 8px 5px;
    border-top: 1px solid #aca899;
    box-shadow: inset 0 1px #fff;
`;

const STEPS = ["00", "33", "66", "99", "cc", "ff"];

// table colours that differ from the plain cube, keyed by green, red and blue step
const OVERRIDES = {
    102: "#3366b8",
    122: "#8d4a86",
    113: "#5a32b8",
    114: "#3147b8",
    131: "#c12f2f",
    201: "#2a937f",
    200: "#3f7d22",
    214: "#5f84cf",
    251: "#d48269",
    210: "#445018",
    241: "#a85528",
    212: "#3b7a6e",
    314: "#6fb4d6",
    311: "#33ac50",
    444: "#cfcfcf",
    450: "#ffff00",
    455: "#ffffff",
    540: "#8b4ac4",
    550: "#b8a82f",
    541: "#d58c52",
    551: "#c248a4",
    533: "#666666",
    542: "#935823",
    552: "#b8301f",
    534: "#2fac8c",
    543: "#d08484",
    544: "#5e7a22",
    535: "#9e2421",
    553: "#32acb8",
    545: "#cfcfcf",
    554: "#4a9d26",
    555: "#3d5fca",
};

const LAYER_TOPS = [9, 69, 129, 189, 249, 303];

const cells = LAYER_TOPS.flatMap((top, g) =>
    STEPS.flatMap((red, r) =>
        STEPS.map((blue, b) => ({
            key: `${g}${r}${b}`,
            x: Math.round(111 + (r - b) * 17.8),
            y: Math.round(top + (r + b) * 4.5),
            color: OVERRIDES[`${g}${r}${b}`] || `#${red}${STEPS[g]}${blue}`,
        }))
    )
);

const SWATCHES = [
    "#5a32b8", "#4a9d26",
    "#9e2421", "#3d5fca",
    "#935823", "#32acb8",
    "#3f7d22", "#8b4ac4",
    "#3147b8", "#d08484",
    "#2a937f", "#b8a82f",
    "#8d4a86", "#33ac50",
    "#b8301f", "#5f84cf",
    "#d58c52", "#6fb4d6",
    "#5e7a22", "#000000",
    "#3366b8", "#333333",
    "#2fac8c", "#666666",
    "#c248a4", "#999999",
    "#c12f2f", "#cfcfcf",
    "#d48269", "#ffffff",
];

const VisualizationPreferences = () => (
    <Dialog role="dialog" aria-labelledby="dialog-title">
        <DialogTitle>
            <Icon name="logo" size={16} />
            <h2 id="dialog-title">Visualization Preferences</h2>
            <CaptionButton $faded aria-label="Close">
                <WindowGlyph name="close" />
            </CaptionButton>
        </DialogTitle>
        <DialogBody>
            <TabRow role="tablist">
                <Tab role="tab" $w={107}>Names/Borders</Tab>
                <Tab role="tab" $w={66}>Line</Tab>
                <Tab role="tab" $w={118} disabled>Special Effects</Tab>
                <Tab role="tab" $w={64}>Screen</Tab>
            </TabRow>
            <TabRow role="tablist">
                <Tab role="tab" $w={46} disabled>Visual</Tab>
                <Tab role="tab" $w={46} disabled>Shade</Tab>
                <Tab role="tab" $w={95}>Color Settings</Tab>
                <Tab role="tab" $w={90} $on aria-selected="true">Color Palette</Tab>
                <Tab role="tab" $w={74} disabled>Perspective</Tab>
            </TabRow>
            <TabPanel role="tabpanel">
                <PartName>Part CDF</PartName>
                <PaletteTools>
                    {["new", "open", "saveOff", "saveAs", "paletteCube", "paletteWire", "handOff", "backOff", "monitor", "info"].map(
                        (name) => (
                            <ToolButton key={name} aria-label={name}>
                                <Icon name={name} size={24} />
                            </ToolButton>
                        )
                    )}
                </PaletteTools>
                <CheckLabel>
                    <Check type="checkbox" />
                    Add to Quick Palette
                </CheckLabel>
                <CheckLabel $boxed>
                    <Check type="checkbox" disabled />
                    Override
                </CheckLabel>
                <Palettes>
                    <ColorStack viewBox="0 0 222 360" role="img" aria-label="Color table">
                        <path
                            d="M12.5 36V325M210.5 36V325"
                            stroke="#fff"
                            strokeDasharray="4 4"
                        />
                        {cells.map(({ key, x, y, color }) => (
                            <path
                                key={key}
                                d={`M${x - 6} ${y - 4}h12l3 2v3l-3 2h-12l-3-2v-3z`}
                                fill={color}
                            />
                        ))}
                        <rect x="101.5" y="343.5" width="20" height="9" fill="none" stroke="#fff" />
                    </ColorStack>
                    <SwatchPanel>
                        <SwatchGrid>
                            {SWATCHES.map((color) => (
                                <Swatch
                                    key={color}
                                    aria-label={color}
                                    $color={color}
                                    $on={color === "#3d5fca"}
                                />
                            ))}
                        </SwatchGrid>
                        <Current />
                    </SwatchPanel>
                </Palettes>
                <ColorInfo>
                    <p>Red 61 Green 95 Blue 202</p>
                    <Fields>
                        <label>
                            Color ID
                            <TextBox $w={30} $right defaultValue="1" />
                        </label>
                        <label>
                            Label
                            <TextBox $w={126} defaultValue="Blue" />
                        </label>
                    </Fields>
                </ColorInfo>
                <ButtonRow>
                    <PushButton>Edit Background</PushButton>
                    <PushButton>Edit Color</PushButton>
                </ButtonRow>
            </TabPanel>
            <DialogButtons>
                <PushButton $w={65} $default>OK</PushButton>
                <PushButton $w={65}>Apply</PushButton>
                <PushButton $w={65}>Cancel</PushButton>
            </DialogButtons>
        </DialogBody>
    </Dialog>
);

/* ---------- page ---------- */

// [text before the access key, access key, rest]
const MENUS = [
    ["", "F", "ile"],
    ["", "E", "dit"],
    ["", "V", "iew"],
    ["In", "s", "ert"],
    ["Fo", "r", "mat"],
    ["", "T", "ools"],
    ["", "A", "ssemblies"],
    ["", "I", "nformation"],
    ["Ana", "l", "ysis"],
    ["", "P", "references"],
    ["Applicatio", "n", ""],
    ["Wind", "o", "w"],
    ["制图工具", "", ""],
    ["", "H", "elp"],
];

const App = () => (
    <Screen>
        <GlobalStyle />
        <TitleBar>
            <Icon name="logo" size={16} />
            <Title>Unigraphics NX 2 - Drafting - [228J7-1713-22-05.prt]</Title>
            <CaptionButton aria-label="Minimize"><WindowGlyph name="min" /></CaptionButton>
            <CaptionButton aria-label="Restore"><WindowGlyph name="restore" /></CaptionButton>
            <CaptionButton $close aria-label="Close"><WindowGlyph name="close" /></CaptionButton>
            <PinkEdge />
        </TitleBar>

        <MenuBar>
            <Icon name="logo" />
            {MENUS.map(([before, key, after]) => (
                <MenuItem key={before + key + after} $cjk={!key}>
                    {before}
                    <u>{key}</u>
                    {after}
                </MenuItem>
            ))}
            <MenuSpace />
            <MdiButton aria-label="Minimize document"><WindowGlyph name="min" color="#605e54" /></MdiButton>
            <MdiButton aria-label="Restore document"><WindowGlyph name="restore" color="#605e54" /></MdiButton>
            <MdiButton aria-label="Close document"><WindowGlyph name="close" color="#605e54" /></MdiButton>
        </MenuBar>

        <ToolRow $end={153}>
            <ToolGroup>
                <Grip />
                <Tools names={["new", "open", "save", "print", "cut", "copy", "paste", "delete", "undo"]} />
            </ToolGroup>
            <ToolGroup $grow>
                <Grip />
                <Tools names={["fit", "fitOff", "zoomWin", "zoom", "pan", "camOff", "cubeOff"]} />
                <MenuSpace />
                <Tools names={["folderHand", "textHand", "cycleHand", "display"]} />
            </ToolGroup>
        </ToolRow>
        <ToolRow $end={179}>
            <ToolGroup>
                <Grip />
                <Tools names={["sheetRed", "pen", "grid", "arc", "arcGreen", "sheetText", "probe", "bomBlue", "redX"]} />
            </ToolGroup>
            <ToolGroup>
                <Grip />
                <Tools names={["off1", "off2", "off3"]} />
            </ToolGroup>
            <ToolGroup $grow>
                <Grip />
                <Tools names={["tools", "solid", "spline", "wire"]} />
                <MenuSpace />
                <Tools names={["mesh", "plus", "brush"]} />
            </ToolGroup>
        </ToolRow>

        <Workspace>
            <Dock>
                <DockColumn $w={39}>
                    <DockBar $w={26}>
                        <DockGrip />
                        <DockTools
                            h={23}
                            names={["dim", "note", "label", "symbolId", "balloon", "weld", "weldHand", "image"]}
                        />
                    </DockBar>
                    <DockBar $w={39}>
                        <DockGrip />
                        <DockTools
                            h={23}
                            drops={["rapid", "ordinate"]}
                            names={["rapid", "cylDim", "hole", "chamfer", "diameter", "radius", "ordinate", "origin"]}
                        />
                    </DockBar>
                    <DockBar $w={26} $pad={8}>
                        <DockGrip />
                        <DockTools
                            h={22}
                            on="viewPen"
                            names={["sheetNew", "sheetOpen", "sheetDelete", "viewAdd", "viewMove", "viewRed", "viewPen"]}
                        />
                    </DockBar>
                </DockColumn>
                <DockColumn $w={27}>
                    <DockBar $w={26} $pad={6}>
                        <DockGrip />
                        <DockTools
                            h={22}
                            names={["circles", "offset", "curves", "project", "section", "mirror"]}
                        />
                    </DockBar>
                    <DockBar $w={26} $pad={2}>
                        <DockGrip />
                        <DockTools
                            h={23}
                            names={["editTool", "textEdit", "noteEdit", "colDim", "arrowEdit", "crossEdit", "hatchEdit", "tableOff"]}
                        />
                    </DockBar>
                </DockColumn>
            </Dock>

            <Viewport>
                <Drawing />
            </Viewport>

            <Navigator>
                <NavTitle>Assembly Navigator</NavTitle>
                <TreeArea>
                    <Tree>
                        <thead>
                            <tr>
                                <th>Descriptive Part Name</th>
                            </tr>
                        </thead>
                        <tbody>
                            <tr>
                                <td>
                                    <TreeItem>
                                        <TreeCheck type="checkbox" defaultChecked />
                                        <Icon name="cube" size={13} />
                                        228J7-1713-22-05
                                    </TreeItem>
                                </td>
                            </tr>
                        </tbody>
                    </Tree>
                </TreeArea>
                <ScrollBar>
                    <ScrollThumb />
                    <ScrollButton aria-label="Scroll right">
                        <svg width="8" height="8" viewBox="0 0 8 8" fill="none" stroke="#4d6185" strokeWidth="2">
                            <path d="M2 0l4 4-4 4" />
                        </svg>
                    </ScrollButton>
                </ScrollBar>
                <Splitter>
                    <SplitterGrip />
                </Splitter>
            </Navigator>

            <ResourceBar>
                <ResourceTab $on aria-label="Assembly Navigator"><Icon name="tree" /></ResourceTab>
                <ResourceTab aria-label="Part Navigator"><Icon name="treeRed" /></ResourceTab>
                <ResourceTab $gap aria-label="Web Browser"><Icon name="web" /></ResourceTab>
                <ResourceTab aria-label="Training"><Icon name="cap" /></ResourceTab>
                <ResourceTab aria-label="Help"><Icon name="help" /></ResourceTab>
                <ResourceTab $gap aria-label="History"><Icon name="clock" /></ResourceTab>
                <ResourceTab aria-label="Palette"><Icon name="sheetGrid" /></ResourceTab>
            </ResourceBar>
        </Workspace>

        <LayerBar>
            <Grip />
            <LayerSelectBox>
                <LayerSelect aria-label="Work layer" defaultValue="102">
                    <option>102</option>
                </LayerSelect>
                <SelectArrow viewBox="0 0 15 20" fill="none" stroke="#4d6185" strokeWidth="2">
                    <path d="M4 8l4 4 4-4" />
                </SelectArrow>
            </LayerSelectBox>
            <Tools names={["layer1", "layer2", "layer3", "csys1", "csys2", "csys3"]} />
        </LayerBar>

        <StatusBar>
            <StatusText>Set color options</StatusText>
            <StatusCell $w={56} />
            <StatusCell $w={47} />
        </StatusBar>

        <Taskbar>
            <StartButton>
                <Flag viewBox="0 0 20 20" aria-hidden="true">
                    <path d="M3 4c2-2 5-1 6 0l-1 6c-2-1-4-1-6 0z" fill="#e85020" />
                    <path d="M10 4c2 1 5 1 7 0l-1 6c-2 1-5 1-7 0z" fill="#80c030" />
                    <path d="M2 11c2-1 4-1 6 0l-1 6c-2-1-4-1-6 0z" fill="#3080e0" />
                    <path d="M9 11c2 1 5 1 7 0l-1 6c-2 1-5 1-7 0z" fill="#f8c830" />
                </Flag>
                开始
            </StartButton>
            <QuickLaunch>
                <Tools names={["ie", "mail", "desktop"]} />
                »
            </QuickLaunch>
            <TaskButton $on>
                <Icon name="logo" />
                Unigraphics NX 2...
            </TaskButton>
            <TaskButton>
                <Icon name="folderTask" />
                X:\228J7-1713\UNIT
            </TaskButton>
            <TaskButton $cjk>
                <Icon name="iePage" />
                图片截图软件，方...
            </TaskButton>
            <MenuSpace />
            <ToolButton $w={36} aria-label="Network"><Icon name="trayRed" size={16} /></ToolButton>
            <Tray>
                <TrayArrow aria-label="Show hidden icons">‹</TrayArrow>
                <Icon name="trayWave" />
                <span>wfq 16:17</span>
            </Tray>
        </Taskbar>

        <VisualizationPreferences />
    </Screen>
);

export default App;
